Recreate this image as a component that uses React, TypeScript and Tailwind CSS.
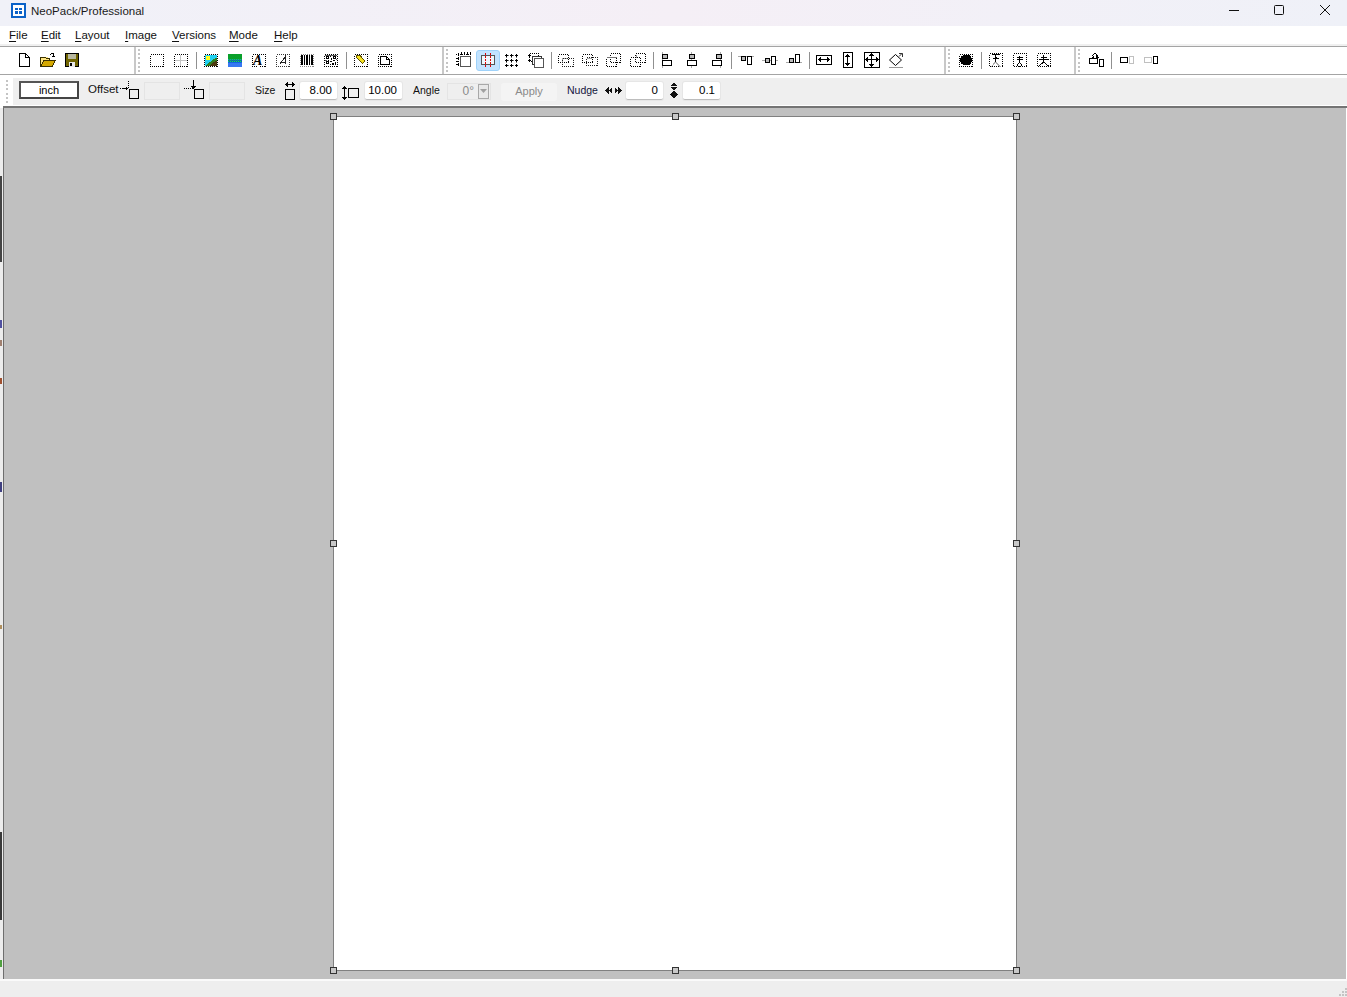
import React from "react";

const FONT = "[font-family:'Liberation_Sans',Arial,sans-serif]";
const K = "#000";
const G = "#a8a8a8";

type P = { children?: React.ReactNode };
const Svg = ({ children, w = 16, h = 16 }: P & { w?: number; h?: number }) => (
  <svg width={w} height={h} viewBox={`0 0 ${w} ${h}`} shapeRendering="crispEdges" className="block shrink-0 -mt-px">
    {children}
  </svg>
);
const Dot = ({ x, y, w, h, c = K }: { x: number; y: number; w: number; h: number; c?: string }) => (
  <rect x={x + 0.5} y={y + 0.5} width={w} height={h} fill="none" stroke={c} strokeDasharray="1 1" />
);
const Box = ({ x, y, w, h, c = K, f = "none" }: { x: number; y: number; w: number; h: number; c?: string; f?: string }) => (
  <rect x={x + 0.5} y={y + 0.5} width={w} height={h} fill={f} stroke={c} />
);
const Ln = ({ d, c = K, dash }: { d: string; c?: string; dash?: string }) => <path d={d} fill="none" stroke={c} strokeDasharray={dash} />;
const Fill = ({ d, c = K }: { d: string; c?: string }) => <path d={d} fill={c} />;

const plus = (x: number, y: number) => `M${x - 1} ${y}h3v1h-3zM${x} ${y - 1}h1v3h-1z`;

const icons: Record<string, React.ReactNode> = {
  page: (<><Fill d="M3 1h7l3 3v10H3z" c="#fff" /><Ln d="M3.500 14.500v-13h6l3.500 3.500v9.500zM9.500 1.500v3.500h3.500" /></>),
  open: (
    <>
      <Fill d="M1 6h2l1-1h4v2h2v2l-7 0-2 5H1z" c="#ffe680" />
      <Fill d="M3 9h12l-3 6H1z" c="#d4a800" />
      <Ln d="M.5 14.500v-8.500l1.500-1h3l1 1h3v3M.5 14.500h11.500l3.500-6h-11.500l-3.500 6" c="#3a3000" />
      <Ln d="M9.500 3.500l2-2h2v3M12 4.500h3" c="#000" />
    </>
  ),
  save: (
    <>
      <rect x="1" y="1" width="14" height="14" fill="#000" />
      <rect x="2" y="2" width="12" height="12" fill="#706400" />
      <rect x="4" y="2" width="8" height="5" fill="#b8b8a0" />
      <rect x="5" y="10" width="6" height="5" fill="#e8e8e8" />
      <rect x="6" y="11" width="2" height="3" fill="#000" />
    </>
  ),
  rect: <Dot x={1} y={2} w={13} h={12} />,
  rectGrid: (<><Dot x={1} y={2} w={13} h={12} /><Ln d="M7.500 3v11M2 8.500h12" c="#c4c4c4" /></>),
  image: (
    <>
      <rect x="2" y="3" width="12" height="11" fill="#20d0f0" />
      <Fill d="M2 14l5-4 3-3 4-1v8z" c="#2f7f20" />
      <Fill d="M6 14l4-4 4-1v5z" c="#4a3a10" />
      <rect x="3" y="4" width="4" height="4" fill="#ffff20" />
      <Dot x={1} y={2} w={13} h={12} />
    </>
  ),
  grad: (
    <>
      <defs>
        <pattern id="dith" width="2" height="2" patternUnits="userSpaceOnUse">
          <rect width="2" height="2" fill="#10b040" />
          <rect width="1" height="1" fill="#1040f0" />
          <rect x="1" y="1" width="1" height="1" fill="#10a0b0" />
        </pattern>
      </defs>
      <rect x="1" y="2" width="14" height="6" fill="#0aa02a" />
      <rect x="1" y="7" width="14" height="4" fill="url(#dith)" />
      <rect x="1" y="10" width="14" height="5" fill="#1460f0" opacity=".85" />
    </>
  ),
  textA: (
    <>
      <Dot x={1} y={2} w={13} h={12} />
      <text x="2" y="13" fontSize="14" fontWeight="700" fontStyle="italic" fontFamily="Liberation Serif">A</text>
    </>
  ),
  textB: (
    <>
      <Dot x={1} y={2} w={13} h={12} c="#333" />
      <Ln d="M5 12l5-7v7M6 10h4" c="#222" />
    </>
  ),
  barcode: (
    <>
      <Dot x={1} y={2} w={13} h={12} c="#888" />
      <Fill d="M2 3h2v10H2zM5 3h1v10H5zM7 3h2v10H7zM10 3h1v10h-1zM12 3h2v10h-2z" />
    </>
  ),
  qr: (
    <>
      <Dot x={1} y={2} w={13} h={12} />
      <Fill d="M3 4h3v3H3zM10 4h3v3h-3zM3 9h3v3H3zM7 4h1v1H7zM8 6h1v2H8zM10 8h2v1h-2zM7 9h2v1H7zM9 11h2v2H9zM12 10h1v3h-1zM7 12h1v1H7zM5 8h1v1H5z" />
      <Fill d="M4 5h1v1H4zM11 5h1v1h-1zM4 10h1v1H4z" c="#fff" />
      <Fill d="M2 3h12v1H2zM2 8h2v1H2zM13 7h1v1h-1z" c="#555" />
    </>
  ),
  tag: (
    <>
      <Dot x={1} y={2} w={13} h={12} />
      <Fill d="M4 4h4l4 5-3 3-5-5z" c="#f6e020" />
      <Ln d="M3.500 3.500h3.500l5 5.500-2.500 2.500-6-6z" c="#5c5000" />
    </>
  ),
  docDot: (
    <>
      <Dot x={1} y={2} w={13} h={12} />
      <Ln d="M3.500 4.500h6l3 3v4.500h-9zM9.500 4.500v3h3" />
    </>
  ),
  ruler: (
    <>
      <Ln d="M0 2.500h15" dash="1 1" />
      <Ln d="M2.500 1v14" dash="1 1" />
      <Ln d="M0 6.500h3M0 9.500h3M0 12.500h3M5.500 0v3M8.500 0v3M11.500 0v3M14.500 0v3" />
      <Box x={4} y={4} w={10} h={10} c="#555" />
    </>
  ),
  guide: (
    <>
      <Box x={1} y={3} w={13} h={9} c="#555" f="#eef6fc" />
      <Ln d="M5.500 1v14M10.500 1v14" c="#e00000" dash="2 1" />
    </>
  ),
  grid: (
    <>
      <Ln d="M4 3.500h2M9 3.500h2M4 8.500h2M9 8.500h2M4 13.500h2M9 13.500h2M2.500 5v2M7.500 5v2M12.500 5v2M2.500 10v2M7.500 10v2M12.500 10v2" c="#777" dash="1 1" />
      <Fill d={[3, 8, 13].flatMap((y) => [2, 7, 12].map((x) => plus(x, y))).join("")} />
    </>
  ),
  layers: (
    <>
      <Dot x={1} y={1} w={9} h={8} />
      <Ln d="M0 3.500h3M1.500 2v3M0 8.500h3" />
      <Box x={4} y={4} w={9} h={8} c="#333" f="#fff" />
      <Box x={6} y={6} w={9} h={9} c="#555" f="#fff" />
    </>
  ),
  ov1: (<><Dot x={0} y={2} w={10} h={8} /><Ln d="M4 6.500h6M4.500 7v3" c="#aaa" /><Dot x={4} y={6} w={11} h={8} c="#222" /></>),
  ov2: (<><Dot x={4} y={5} w={11} h={8} c="#222" /><Dot x={0} y={2} w={10} h={8} /><Ln d="M5 6.500h5" c="#aaa" /></>),
  ov3: (<><Dot x={4} y={1} w={10} h={9} /><Dot x={0} y={5} w={10} h={9} /><Ln d="M1 5.500h10" c="#777" /></>),
  ov4: (<><Dot x={5} y={1} w={10} h={9} /><Dot x={0} y={5} w={10} h={9} /><Ln d="M6 2.500v3" c="#999" /></>),
  al1: (<><Ln d="M2.500 0v16" c={G} /><Box x={2} y={2} w={5} h={4} f="#bbb" /><Box x={2} y={8} w={9} h={5} f="#fff" /></>),
  al2: (<><Ln d="M7.500 0v16" c={G} /><Box x={5} y={2} w={5} h={4} f="#bbb" /><Box x={3} y={8} w={9} h={5} f="#fff" /></>),
  al3: (<><Ln d="M12.500 0v16" c={G} /><Box x={8} y={2} w={5} h={4} f="#bbb" /><Box x={4} y={8} w={9} h={5} f="#fff" /></>),
  at1: (<><Ln d="M0 4.500h16" c={G} /><Box x={3} y={4} w={4} h={4} f="#bbb" /><Box x={9} y={4} w={4} h={8} f="#fff" /></>),
  at2: (<><Ln d="M0 8.500h16" c={G} /><Box x={3} y={6} w={4} h={4} f="#bbb" /><Box x={9} y={4} w={4} h={8} f="#fff" /></>),
  at3: (<><Ln d="M0 10.500h16" c={G} /><Box x={3} y={6} w={4} h={4} f="#bbb" /><Box x={9} y={2} w={4} h={8} f="#fff" /></>),
  szw: (
    <>
      <Box x={0} y={3} w={15} h={9} />
      <Ln d="M2 7.500h12" />
      <Fill d="M2 7.500l3-3v6zM14 7.500l-3-3v6z" />
    </>
  ),
  szh: (
    <>
      <Box x={3} y={0} w={9} h={15} />
      <Ln d="M7.500 2v12" />
      <Fill d="M7.500 2l-3 3h6zM7.500 14l-3-3h6z" />
    </>
  ),
  szb: (
    <>
      <Box x={0} y={0} w={15} h={15} />
      <Ln d="M2 7.500h12M7.500 2v12" />
      <Fill d="M1 7.500l3-3v6zM15 7.500l-3-3v6zM7.500 1l-3 3h6zM7.500 15l-3-3h6z" />
    </>
  ),
  rot: (
    <g shapeRendering="auto">
      <path d="M7.500 2.500L13.500 8l-6 5.500L1.500 8z" fill="none" stroke="#000" />
      <path d="M1 15.500h14" stroke="#999" />
      <path d="M11 4.500l3-3M11 1.500h3.500v3.500" fill="none" stroke="#333" />
    </g>
  ),
  blob: (
    <>
      <Dot x={1} y={2} w={13} h={12} />
      <Fill d="M5 3h6l1 1h1v2h1v4h-1v2h-1l-1 1H5l-1-1H3v-2H2V6h1V4h1z" />
    </>
  ),
  p1: (
    <>
      <Dot x={1} y={1} w={13} h={13} />
      <Ln d="M4 2.500h8M7.500 2.500v8M5 6.500h6" />
      <Ln d="M7.500 10L3 15M7.500 10l5 5" c="#aaa" />
      <Fill d="M7.500 4.500l-2 2h4z" />
    </>
  ),
  p2: (
    <>
      <Dot x={1} y={1} w={13} h={13} />
      <Ln d="M5 5.500h6M5 7.500h6M7.500 4v6M5 13.500l2.500-3 2.500 3" />
    </>
  ),
  p3: (
    <>
      <Dot x={1} y={1} w={13} h={13} />
      <Ln d="M3 7.500h10M7.500 3v7M3 14l4.500-4 5 4" />
      <Ln d="M5 5.500h6" />
    </>
  ),
  swap: (
    <>
      <Box x={1} y={6} w={8} h={5} />
      <Box x={11} y={7} w={4} h={7} />
      <Ln d="M4 4l3-3 3 3" />
      <Fill d="M3 6h3V3zM11 6H8V3z" />
    </>
  ),
  same1: (<><Box x={1} y={5} w={7} h={5} /><Box x={10} y={4} w={4} h={7} c="#c0c0c0" /></>),
  same2: (<><Box x={1} y={5} w={7} h={5} c="#c0c0c0" /><Box x={10} y={4} w={4} h={7} /></>),
};

const Btn = ({ n, on }: { n: string; on?: boolean }) => (
  <div className={`w-[24px] flex items-center justify-center shrink-0 rounded-[3px] ${on ? "h-[21px] -mt-px bg-[#c2e3ff] border border-[#9fd2fa] pt-px" : "h-[24px]"}`}>
    <Svg>{icons[n]}</Svg>
  </div>
);
const Sep = () => <div className="w-px h-[17px] bg-[#909090] ml-[3px] mr-[2px] shrink-0" />;
const Grip = ({ h = 24 }: { h?: number }) => (
  <div className="w-[3px] shrink-0 flex flex-col justify-between" style={{ height: h }}>
    {Array.from({ length: Math.floor(h / 4) }).map((_, i) => (
      <div key={i} className="w-[2px] h-[2px] bg-[#c4c4c4]" />
    ))}
  </div>
);

const Seg = ({ w, items, mr = 3 }: { w: number; items: string[]; mr?: number }) => (
  <div className="h-full flex items-center shrink-0 border-r-2 border-[#c8c8c8]" style={{ width: w }}>
    <div className="ml-[2px]" style={{ marginRight: mr }}>
      <Grip />
    </div>
    {items.map((n, i) => (n === "|" ? <Sep key={i} /> : <Btn key={i} n={n} on={n === "guide"} />))}
  </div>
);

const Inp = ({ v, ml, w = 37 }: { v: string; ml: number; w?: number }) => (
  <div style={{ marginLeft: ml, width: w }} className="h-[18px] mb-px pt-px shrink-0 bg-white rounded-[2px] border-b border-[#bdbdbd] shadow-[0_0_0_1px_#e6e6e6] flex items-center justify-end pr-[5px] text-[11.500px] leading-none text-black">
    {v}
  </div>
);
const Off = ({ ml }: { ml: number }) => (
  <div style={{ marginLeft: ml }} className="w-[36px] h-[18px] mb-[2px] shrink-0 border border-[#e4e4e4] bg-[#efefef]" />
);
const Lbl = ({ t, ml, w, c = "text-[#111]", fs = 10.5 }: { t: string; ml: number; w: number; c?: string; fs?: number }) => (
  <span style={{ marginLeft: ml, width: w, fontSize: fs }} className={`leading-none shrink-0 mb-[3px] whitespace-nowrap ${c}`}>{t}</span>
);

const H = ({ cls }: { cls: string }) => (
  <div className={`absolute w-[7px] h-[7px] bg-[#c8c8c8] border border-[#333] ${cls}`} />
);

const Menu = ({ k, r, w }: { k: string; r: string; w: number }) => (
  <span style={{ width: w }} className="shrink-0">
    <span className="underline underline-offset-2">{k}</span>
    {r}
  </span>
);

const strip: [number, string][] = [
  [68, "#ececec"], [86, "#444444"], [58, "#ececec"], [8, "#5050a0"], [12, "#ececec"], [6, "#a08070"],
  [32, "#ececec"], [6, "#a05030"], [98, "#ececec"], [10, "#404080"], [133, "#ececec"], [4, "#b09060"], [203, "#ececec"],
  [88, "#3a3a3a"], [40, "#ececec"], [7, "#50a040"], [30, "#ececec"],
];

export default function App() {
  return (
    <div className={`w-[1347px] h-[997px] overflow-hidden flex flex-col bg-white ${FONT}`}>
      <div className="h-[26px] flex items-start shrink-0 bg-linear-to-r from-[#f0f1f8] via-[#f5eff6] to-[#eff1f8]">
        <svg width="15" height="15" viewBox="0 0 15 15" className="ml-[11px] mt-[3px] shrink-0" shapeRendering="crispEdges">
          <rect width="15" height="15" fill="#0b62c8" />
          <path d="M2 2h11v11H2z" fill="#fff" />
          <path d="M4 5h3v2H4zM8 5h3v2H8zM4 8h3v3H4zM8 8h3v3H8z" fill="#0b62c8" />
        </svg>
        <span className="ml-[5px] mt-[4px] text-[11.500px] text-[#1a1a1a] leading-[14px]">NeoPack/Professional</span>
        <div className="ml-auto flex items-start mt-[4px]">
          <svg width="12" height="12" viewBox="0 0 12 12" className="mr-[33px]" shapeRendering="crispEdges"><path d="M1 6.500h10" stroke="#111" /></svg>
          <svg width="12" height="12" viewBox="0 0 12 12" className="mr-[34px]"><rect x="1.500" y="1.500" width="9" height="9" rx="1" fill="none" stroke="#111" /></svg>
          <svg width="12" height="12" viewBox="0 0 12 12" className="mr-[16px]"><path d="M1 1l10 10M11 1L1 11" stroke="#111" /></svg>
        </div>
      </div>

      <div className="h-[18px] pt-[2px] shrink-0 flex items-center pl-[9px] text-[11.500px] leading-none text-[#111] bg-white">
        <Menu k="F" r="ile" w={32} />
        <Menu k="E" r="dit" w={34} />
        <Menu k="L" r="ayout" w={50} />
        <Menu k="I" r="mage" w={47} />
        <Menu k="V" r="ersions" w={57} />
        <Menu k="M" r="ode" w={45} />
        <Menu k="H" r="elp" w={30} />
      </div>
      <div className="h-[2px] shrink-0 bg-[#f0f0f0]" />

      <div className="h-[29px] shrink-0 flex items-center bg-white border-t border-b border-[#a4a4a4] pl-[4px]">
        <div className="h-full flex items-center shrink-0 border-r-2 border-[#c8c8c8] w-[132px] pl-[8px]">
          <Btn n="page" /><Btn n="open" /><Btn n="save" />
        </div>
        <Seg w={308} mr={4} items={["rect", "rectGrid", "|", "image", "grad", "textA", "textB", "barcode", "qr", "|", "tag", "docDot"]} />
        <Seg w={502} items={["ruler", "guide", "grid", "layers", "|", "ov1", "ov2", "ov3", "ov4", "|", "al1", "al2", "al3", "|", "at1", "at2", "at3", "|", "szw", "szh", "szb", "rot"]} />
        <Seg w={130} items={["blob", "|", "p1", "p2", "p3"]} />
        <div className="h-full flex items-center">
          <div className="ml-[2px] mr-[3px]"><Grip /></div>
          <Btn n="swap" /><Sep /><div className="w-px" /><Btn n="same1" /><Btn n="same2" />
        </div>
      </div>

      <div className="h-[3px] shrink-0 bg-white" />

      <div className="h-[27px] shrink-0 flex items-center bg-white">
        <div className="ml-[6px] mr-[4px]"><Grip h={24} /></div>
        <div className="flex-1 h-full flex items-center bg-[#efefef]">
          <div className="ml-[6px] w-[60px] h-[18px] mb-[4px] pt-px shrink-0 bg-white border-2 border-[#444] border-t-[#555] border-l-[#555] flex items-center justify-center text-[11px] leading-none text-black">inch</div>
          <Lbl t="Offset" ml={9} w={31} fs={11.5} />
          <svg width="19" height="20" viewBox="0 0 19 20" className="ml-px mb-[4px] shrink-0" shapeRendering="crispEdges">
            <path d="M0 8.500h8M8.500 1v7" stroke="#000" strokeDasharray="1 1" /><path d="M3 8.500h5" stroke="#000" /><path d="M8 8.500l-2-2v4z" />
            <rect x="9.500" y="9.500" width="9" height="9" fill="none" stroke="#000" />
          </svg>
          <Off ml={5} />
          <svg width="20" height="20" viewBox="0 0 20 20" className="ml-[4px] mb-[4px] shrink-0" shapeRendering="crispEdges">
            <path d="M0 8.500h9" stroke="#000" strokeDasharray="1 1" /><path d="M9.500 0v9" stroke="#000" /><path d="M7 6h5l-2.500 3z" />
            <rect x="10.500" y="9.500" width="9" height="9" fill="none" stroke="#000" />
          </svg>
          <Off ml={5} />
          <Lbl t="Size" ml={10} w={19} />
          <svg width="12" height="20" viewBox="0 0 12 20" className="ml-[10px] mb-px shrink-0" shapeRendering="crispEdges">
            <path d="M1 3.500h10" stroke="#000" /><path d="M1 3.500l3-2.500v5zM11 3.500l-3-2.500v5z" /><rect x="1.500" y="8.500" width="9" height="10" fill="none" stroke="#000" />
          </svg>
          <Inp v="8.00" ml={4} />
          <svg width="18" height="14" viewBox="0 0 18 14" className="ml-[5px] mt-[3px] shrink-0" shapeRendering="crispEdges">
            <path d="M2.500 1v12" stroke="#000" /><path d="M2.500 0l-2.500 3h5zM2.500 14l-2.500-3h5z" /><rect x="6.500" y="2.500" width="10" height="9" fill="none" stroke="#000" />
          </svg>
          <Inp v="10.00" ml={5} />
          <Lbl t="Angle" ml={11} w={27} />
          <div className="ml-[7px] w-[44px] h-[17px] mb-px shrink-0 border border-[#e4e4e4] flex items-center justify-end text-[12px] leading-none text-[#8a8a8a]">
            <span className="mr-[4px]">0°</span>
            <div className="w-[11px] h-[15px] mr-px border border-[#a8a8a8] bg-[#e8e8e8] flex items-center justify-center">
              <svg width="7" height="4" viewBox="0 0 7 4"><path d="M0 0h7L3.500 4z" fill="#a0a0a0" /></svg>
            </div>
          </div>
          <div className="ml-[10px] w-[56px] h-[18px] shrink-0 rounded-[3px] bg-[#f4f4f4] flex items-center justify-center text-[11px] leading-none text-[#8a8a8a]">Apply</div>
          <Lbl t="Nudge" ml={10} w={32} c="text-[#14143c]" />
          <svg width="17" height="7" viewBox="0 0 17 7" className="ml-[6px] mb-[3px] shrink-0" shapeRendering="crispEdges">
            <path d="M0 3.500l4-3.500v7zM4 3.500l3-3v6zM10 .5l3 3-3 3zM13 0l4 3.500-4 3.500z" fill="#111" />
          </svg>
          <Inp v="0" ml={4} />
          <svg width="8" height="17" viewBox="0 0 8 17" className="ml-[7px] mb-[2px] shrink-0" shapeRendering="crispEdges">
            <path d="M4 0L7 4H1zM0 5h8L4 8zM0 12h8L4 17zM4 9l4 3H0z" fill="#111" />
          </svg>
          <Inp v="0.1" ml={5} />
        </div>
      </div>

      <div className="h-px shrink-0 bg-white" />
      <div className="h-[2px] shrink-0 ml-[3px] bg-[#747474]" />

      <div className="flex-1 flex min-h-0">
        <div className="w-[3px] shrink-0 flex flex-col overflow-hidden bg-[#ececec]">
          {strip.map(([h, c], i) => (
            <div key={i} style={{ height: h, backgroundColor: c }} className="w-[2px] shrink-0" />
          ))}
        </div>
        <div className="w-px shrink-0 bg-[#6e6e6e]" />
        <div className="flex-1 bg-[#c0c0c0] pt-[8px] pl-[329px]">
          <div className="relative w-[684px] h-[855px] bg-white border border-[#808080]">
            <H cls="-left-[4px] -top-[4px]" />
            <H cls="left-[338px] -top-[4px]" />
            <H cls="-right-[4px] -top-[4px]" />
            <H cls="-left-[4px] top-[423px]" />
            <H cls="-right-[4px] top-[423px]" />
            <H cls="-left-[4px] -bottom-[4px]" />
            <H cls="left-[338px] -bottom-[4px]" />
            <H cls="-right-[4px] -bottom-[4px]" />
          </div>
        </div>
        <div className="w-px shrink-0 bg-white" />
      </div>

      <div className="h-[18px] shrink-0 border-t-2 border-[#fafafa] bg-[#eeeeee] flex items-end justify-end">
        <svg width="8" height="8" viewBox="0 0 8 8" className="mb-px" shapeRendering="crispEdges">
          <path d="M6 0h2v2H6zM3 3h2v2H3zM6 3h2v2H6zM0 6h2v2H0zM3 6h2v2H3zM6 6h2v2H6z" fill="#c4c4c4" />
        </svg>
      </div>
    </div>
  );
}
